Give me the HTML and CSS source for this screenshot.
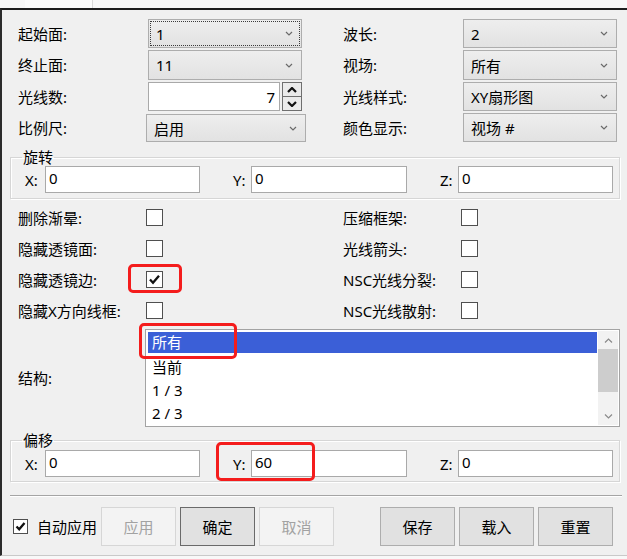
FILE: index.html
```html
<!DOCTYPE html>
<html lang="zh-CN">

<head>
    <meta charset="UTF-8">
    <meta name="viewport" content="width=device-width, initial-scale=1.0">
    <title>布局设置</title>
    <link rel="stylesheet" href="styles.css">
</head>

<body>
    <div class="tabstrip"><div class="tab"></div></div>

    <div class="window">
        <div class="fields">
            <label class="lbl">起始面:</label>
            <div class="combo focus"><span>1</span>
                <svg class="chev" width="8" height="5" viewBox="0 0 8 5"><path d="M1 1l3 3 3-3" /></svg>
            </div>
            <label class="lbl r-lbl">波长:</label>
            <div class="combo"><span>2</span>
                <svg class="chev" width="8" height="5" viewBox="0 0 8 5"><path d="M1 1l3 3 3-3" /></svg>
            </div>

            <label class="lbl">终止面:</label>
            <div class="combo"><span>11</span>
                <svg class="chev" width="8" height="5" viewBox="0 0 8 5"><path d="M1 1l3 3 3-3" /></svg>
            </div>
            <label class="lbl r-lbl">视场:</label>
            <div class="combo"><span>所有</span>
                <svg class="chev" width="8" height="5" viewBox="0 0 8 5"><path d="M1 1l3 3 3-3" /></svg>
            </div>

            <label class="lbl">光线数:</label>
            <div class="spin">
                <div class="spin-box">7</div>
                <div class="spin-btns">
                    <span><svg width="10" height="6" viewBox="0 0 10 6"><path d="M1 5l4-4 4 4" /></svg></span>
                    <span><svg width="10" height="6" viewBox="0 0 10 6"><path d="M1 1l4 4 4-4" /></svg></span>
                </div>
            </div>
            <label class="lbl r-lbl">光线样式:</label>
            <div class="combo"><span>XY扇形图</span>
                <svg class="chev" width="8" height="5" viewBox="0 0 8 5"><path d="M1 1l3 3 3-3" /></svg>
            </div>

            <label class="lbl">比例尺:</label>
            <div class="combo wide"><span>启用</span>
                <svg class="chev" width="8" height="5" viewBox="0 0 8 5"><path d="M1 1l3 3 3-3" /></svg>
            </div>
            <label class="lbl r-lbl">颜色显示:</label>
            <div class="combo"><span>视场 #</span>
                <svg class="chev" width="8" height="5" viewBox="0 0 8 5"><path d="M1 1l3 3 3-3" /></svg>
            </div>
        </div>

        <fieldset class="group">
            <legend>旋转</legend>
            <div class="xyz">
                <label class="lbl">X:</label>
                <div class="field">0</div>
                <span></span>
                <label class="lbl">Y:</label>
                <div class="field">0</div>
                <span></span>
                <label class="lbl">Z:</label>
                <div class="field">0</div>
            </div>
        </fieldset>

        <div class="checks">
            <label class="lbl">删除渐晕:</label><span class="cb"></span>
            <label class="lbl r-lbl">压缩框架:</label><span class="cb"></span>

            <label class="lbl">隐藏透镜面:</label><span class="cb"></span>
            <label class="lbl r-lbl">光线箭头:</label><span class="cb"></span>

            <label class="lbl">隐藏透镜边:</label>
            <span class="cb">
                <svg width="15" height="15" viewBox="0 0 15 15"><path d="M3 7.5l3 3.2 6-7" /></svg>
                <span class="mark mark-cb"></span>
            </span>
            <label class="lbl r-lbl">NSC光线分裂:</label><span class="cb"></span>

            <label class="lbl">隐藏X方向线框:</label><span class="cb"></span>
            <label class="lbl r-lbl">NSC光线散射:</label><span class="cb"></span>
        </div>

        <div class="struct">
            <label class="lbl">结构:</label>
            <div class="listbox">
                <div class="items">
                    <div class="item sel">所有</div>
                    <div class="item">当前</div>
                    <div class="item">1 / 3</div>
                    <div class="item">2 / 3</div>
                </div>
                <div class="scroll">
                    <div class="sb-btn"><svg width="9" height="5" viewBox="0 0 9 5"><path d="M1 4.5l3.5-3.5 3.5 3.5" /></svg></div>
                    <div class="sb-thumb"></div>
                    <div class="sb-track"></div>
                    <div class="sb-btn"><svg width="9" height="5" viewBox="0 0 9 5"><path d="M1 0.5l3.5 3.5 3.5-3.5" /></svg></div>
                </div>
                <span class="mark mark-item"></span>
            </div>
        </div>

        <fieldset class="group group-offset">
            <legend>偏移</legend>
            <div class="xyz">
                <label class="lbl">X:</label>
                <div class="field">0</div>
                <span></span>
                <label class="lbl y-cell">Y:<span class="mark mark-y"></span></label>
                <div class="field">60</div>
                <span></span>
                <label class="lbl">Z:</label>
                <div class="field">0</div>
            </div>
        </fieldset>

        <hr class="sep">

        <div class="actions">
            <div class="auto">
                <span class="cb cb-small">
                    <svg width="13" height="13" viewBox="0 0 13 13"><path d="M2.5 6.5l2.7 2.8 5.3-6.3" /></svg>
                </span>
                <span>自动应用</span>
            </div>
            <button class="btn off">应用</button>
            <button class="btn def">确定</button>
            <button class="btn off">取消</button>
            <button class="btn spaced">保存</button>
            <button class="btn">载入</button>
            <button class="btn">重置</button>
        </div>
    </div>
</body>

</html>
```

FILE: styles.css
```css
* {
    box-sizing: border-box;
}

body {
    margin: 0;
    background: #f8f8f8;
    font-family: "Noto Sans", "Noto Sans CJK SC", sans-serif;
    font-size: 15px;
    color: #000;
    overflow: hidden;
}

.tabstrip {
    height: 8px;
}

.tab {
    margin-left: 25px;
    width: 68px;
    height: 8px;
    background: #fcfcfc;
    border-right: 1px solid #dadada;
}

.window {
    width: 640px;
    height: 548px;
    padding-top: 9px;
    background: #f0f0f0;
    border-top: 2px solid #1e1e1e;
    border-left: 2px solid #2b2b2b;
    border-bottom: 1px solid #c9c9c9;
}

.lbl {
    display: flex;
    align-items: center;
    white-space: nowrap;
    line-height: 18px;
}

/* top block of combos */
.fields {
    display: grid;
    grid-template-columns: 130px 154px 41px 120px 154px;
    grid-template-rows: 29px 30px 29px 29px;
    row-gap: 2px;
    padding-left: 16px;
}

.r-lbl {
    grid-column: 4;
}

.combo {
    display: flex;
    align-items: center;
    justify-content: space-between;
    padding: 0 8px 0 7px;
    border: 1px solid #adadad;
    background: linear-gradient(#eeeeee, #e2e2e2);
}

.combo.focus {
    outline: 1px dotted #3a3a3a;
    outline-offset: -3px;
}

.combo.wide {
    margin: 1px 0 0 -2px;
    width: 160px;
}

.chev path {
    fill: none;
    stroke: #6a6a6a;
    stroke-width: 1.2;
}

.spin {
    display: flex;
    gap: 2px;
}

.spin-box {
    flex: 1;
    display: flex;
    align-items: center;
    justify-content: flex-end;
    padding-right: 4px;
    background: #fff;
    border: 1px solid #a9a9a9;
}

.spin-btns {
    width: 20px;
    display: flex;
    flex-direction: column;
    border: 1px solid #6f6f6f;
}

.spin-btns span {
    flex: 1;
    display: flex;
    align-items: center;
    justify-content: center;
    background: #ebebeb;
}

.spin-btns span + span {
    border-top: 1px solid #6f6f6f;
}

.spin-btns path {
    fill: none;
    stroke: #111;
    stroke-width: 2.2;
}

/* group boxes */
.group {
    width: 610px;
    margin: 7px 0 0 8px;
    padding: 1px 0 5px;
    border: 1px solid #d6d6d6;
    box-shadow: inset 1px 1px 0 #fff, 1px 1px 0 #fff;
    min-width: 0;
}

.group legend {
    margin-left: 11px;
    padding: 0 1px;
    line-height: 16px;
}

.group-offset {
    margin-top: 5px;
    padding: 2px 0 4px;
}

.xyz {
    display: grid;
    grid-template-columns: 20px 155px 33px 18px 156px 33px 18px 155px;
    grid-template-rows: 27px;
    padding-left: 14px;
}

.field {
    background: #fff;
    border: 1px solid #a9a9a9;
    padding: 2px 3px;
    line-height: 18px;
}

/* checkboxes */
.checks {
    display: grid;
    grid-template-columns: 128px 17px 180px 118px 17px;
    grid-auto-rows: 31px;
    align-items: center;
    padding-left: 16px;
    margin-top: 3px;
}

.cb {
    position: relative;
    width: 17px;
    height: 17px;
    display: flex;
    align-items: center;
    justify-content: center;
    background: #fff;
    border: 1px solid #4f4f4f;
}

.cb path {
    fill: none;
    stroke: #111;
    stroke-width: 2.3;
}

.cb-small {
    width: 15px;
    height: 15px;
}

/* structure list */
.struct {
    display: flex;
    align-items: center;
    margin-top: 3px;
    padding-left: 16px;
}

.struct .lbl {
    width: 127px;
}

.listbox {
    position: relative;
    display: flex;
    width: 475px;
    height: 98px;
    padding: 1px 1px 1px 2px;
    background: #fff;
    border: 1px solid #a3a3a3;
}

.items {
    flex: 1;
}

.item {
    height: 23px;
    line-height: 23px;
    padding-left: 4px;
    white-space: nowrap;
}

.item.sel {
    margin: 1px 1px 3px 0;
    height: 21px;
    line-height: 21px;
    background: #3b5fd7;
    color: #fff;
}

.scroll {
    width: 20px;
    display: flex;
    flex-direction: column;
    background: #f2f2f2;
}

.sb-btn {
    height: 18px;
    display: flex;
    align-items: center;
    justify-content: center;
}

.sb-btn path {
    fill: none;
    stroke: #8a8a8a;
    stroke-width: 1.2;
}

.sb-thumb {
    height: 43px;
    background: #cdcdcd;
}

.sb-track {
    flex: 1;
}

/* red annotation frames */
.mark {
    position: absolute;
    border: 3px solid #f41c1c;
    border-radius: 5px;
    pointer-events: none;
}

.mark-cb {
    left: -19px;
    top: -8px;
    width: 54px;
    height: 29px;
}

.mark-item {
    left: -7px;
    top: -7px;
    width: 98px;
    height: 36px;
}

.y-cell {
    position: relative;
}

.mark-y {
    left: -17px;
    top: -8px;
    width: 99px;
    height: 39px;
}

.sep {
    width: 612px;
    height: 0;
    margin: 13px 0 0 8px;
    border: 0;
    border-top: 1px solid #a5a5a5;
    border-bottom: 1px solid #fff;
}

/* bottom buttons */
.actions {
    display: flex;
    align-items: center;
    margin-top: 10px;
    padding-left: 11px;
}

.auto {
    display: flex;
    align-items: center;
    gap: 9px;
    width: 88px;
    white-space: nowrap;
}

.btn {
    width: 75px;
    height: 39px;
    margin-right: 4px;
    font: inherit;
    color: #000;
    background: #e1e1e1;
    border: 1px solid #adadad;
}

.btn.def {
    border-color: #6a6a6a;
}

.btn.off {
    color: #a2a2a2;
    background: #f3f3f3;
    border-color: #d6d6d6;
}

.btn.spaced {
    margin-left: 42px;
}
```
